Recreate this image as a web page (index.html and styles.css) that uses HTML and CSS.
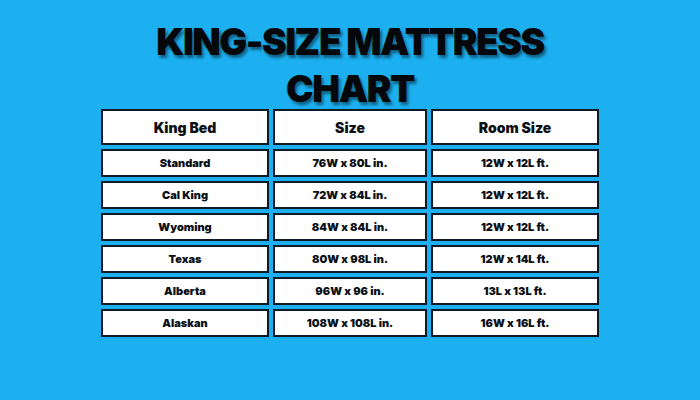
FILE: index.html
```html
<!DOCTYPE html>
<html>
<head>
<meta charset="utf-8">
<link rel="stylesheet" href="styles.css">
</head>
<body>
<div class="page">
  <h1 class="title">KING-SIZE MATTRESS<br>CHART</h1>
  <div class="chart">
    <div class="cell head">King Bed</div>
    <div class="cell head">Size</div>
    <div class="cell head">Room Size</div>

    <div class="cell">Standard</div>
    <div class="cell">76W x 80L in.</div>
    <div class="cell">12W x 12L ft.</div>

    <div class="cell">Cal King</div>
    <div class="cell">72W x 84L in.</div>
    <div class="cell">12W x 12L ft.</div>

    <div class="cell">Wyoming</div>
    <div class="cell">84W x 84L in.</div>
    <div class="cell">12W x 12L ft.</div>

    <div class="cell">Texas</div>
    <div class="cell">80W x 98L in.</div>
    <div class="cell">12W x 14L ft.</div>

    <div class="cell">Alberta</div>
    <div class="cell">96W x 96 in.</div>
    <div class="cell">13L x 13L ft.</div>

    <div class="cell">Alaskan</div>
    <div class="cell">108W x 108L in.</div>
    <div class="cell">16W x 16L ft.</div>
  </div>
</div>
</body>
</html>
```

FILE: styles.css
```css
html, body {
  margin: 0;
  padding: 0;
  background: #1cb0f0;
}
.page {
  width: 700px;
  height: 400px;
  display: flex;
  flex-direction: column;
  align-items: center;
  font-family: Inter, "Liberation Sans", sans-serif;
  color: #0a0f18;
}
.title {
  margin: 18px 0 -3px 0;
  font-size: 37px;
  line-height: 47px;
  font-weight: 900;
  text-align: center;
  letter-spacing: -1.4px;
  color: #05070b;
  text-shadow: 2px 3px 3px rgba(0, 0, 0, 0.45);
}
.chart {
  display: grid;
  grid-template-columns: 168px 154px 168px;
  grid-template-rows: 36px repeat(6, 28px);
  gap: 4px;
}
.cell {
  box-sizing: border-box;
  background: #ffffff;
  border: 2px solid #101a28;
  display: flex;
  align-items: center;
  justify-content: center;
  font-size: 11px;
  font-weight: 900;
  color: #0c0f14;
}
.cell.head {
  font-size: 14px;
}
```
